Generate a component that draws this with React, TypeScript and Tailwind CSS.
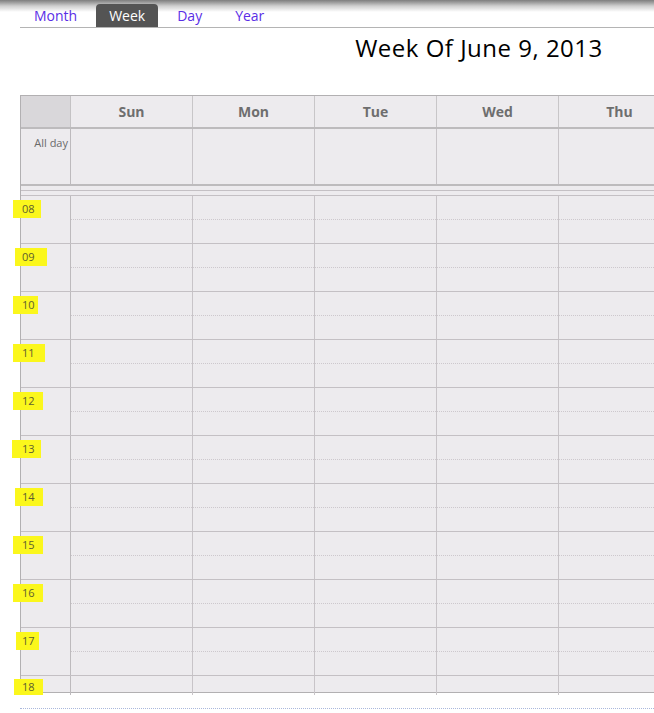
const tabs = ["Month", "Week", "Day", "Year"];
const days = ["Sun", "Mon", "Tue", "Wed", "Thu", "Fri", "Sat"];
const hours = ["08", "09", "10", "11", "12", "13", "14", "15", "16", "17"];

// hand-drawn looking marker highlights, one per hour label
const marks = [
  "-ml-[8px] pl-[9px] pr-[6px]",
  "-ml-[6px] pl-[7px] pr-[12px]",
  "-ml-[8px] pl-[9px] pr-[3px]",
  "-ml-[8px] pl-[9px] pr-[10px]",
  "-ml-[8px] pl-[9px] pr-[8px]",
  "-ml-[9px] pl-[10px] pr-[6px]",
  "-ml-[6px] pl-[7px] pr-[8px]",
  "-ml-[8px] pl-[9px] pr-[8px]",
  "-ml-[8px] pl-[9px] pr-[8px]",
  "-ml-[5px] pl-[6px] pr-[4px]",
];

const tabGap: Record<string, string> = {
  Month: "ml-[14px] mr-[19px]",
  Week: "",
  Day: "ml-[19px]",
  Year: "ml-[33px]",
};

function Tabs() {
  return (
    <div className="relative flex h-[28px] items-end border-b border-[#b4b4b4] text-[14px]">
      {tabs.map((tab) =>
        tab === "Week" ? (
          <div key={tab} className="flex h-[23px] w-[62px] items-center justify-center rounded-t-[4px] bg-[#545454] text-white">
            {tab}
          </div>
        ) : (
          <div key={tab} className={`flex h-[23px] items-center text-[#5a2ee6] ${tabGap[tab]}`}>
            {tab}
          </div>
        )
      )}
    </div>
  );
}

function HourRow({ hour, mark }: { hour: string; mark: string }) {
  return (
    <div className="grid h-[48px] grid-cols-[50px_repeat(7,122px)] border-b border-[#c4c0c4]">
      <div className="border-r border-[#bdbabd] pt-[4px] text-[11px] leading-[16px] text-[#5e5e30]">
        <span className={`inline-block bg-[#fbf71c] py-[1px] ${mark}`}>{hour}</span>
      </div>
      {days.map((day) => (
        <div key={day} className="flex flex-col border-r border-[#c8c4c8]">
          <div className="h-[24px] border-b border-dotted border-[#cdc8cd]" />
        </div>
      ))}
    </div>
  );
}

export default function App() {
  return (
    <div className="relative h-[713px] w-[654px] overflow-hidden bg-white" style={{ fontFamily: '"Open Sans", "DejaVu Sans", sans-serif' }}>
      <div className="absolute inset-x-0 top-0 h-[12px] bg-gradient-to-b from-[#7e7e7e] via-[#cfcfcf] to-white" />
      <div className="relative w-[938px] pl-[20px]">
        <Tabs />
        <div className="flex h-[67px] justify-center pt-[5px] text-[24px] leading-[30px] tracking-[0.5px] text-black">
          Week Of June 9, 2013
        </div>
        <div className="w-[907px] border border-[#b2b0b2] bg-[#edebee]">
          <div className="grid h-[33px] grid-cols-[50px_repeat(7,122px)] border-b-[2px] border-[#bdbbbd]">
            <div className="border-r border-[#c4c2c4] bg-[#d9d7da]" />
            {days.map((day) => (
              <div key={day} className="flex items-center justify-center border-r border-[#c8c6c8] text-[14px] font-bold text-[#6e6e6e]">
                {day}
              </div>
            ))}
          </div>
          <div className="grid h-[57px] grid-cols-[50px_repeat(7,122px)] border-b-[2px] border-[#bdbbbd]">
            <div className="border-r border-[#bdbabd] pr-[2px] pt-[6px] text-right text-[11px] text-[#6a6a6a]">All day</div>
            {days.map((day) => (
              <div key={day} className="border-r border-[#c8c4c8]" />
            ))}
          </div>
          <div className="h-[5px] border-b border-[#c4c0c4]" />
          <div className="h-[5px] border-b border-[#c4c0c4]" />
          {hours.map((hour, i) => (
            <HourRow key={hour} hour={hour} mark={marks[i]} />
          ))}
          <div className="grid h-[16px] grid-cols-[50px_repeat(7,122px)]">
            <div className="border-r border-[#bdbabd] pt-[3px] text-[11px] leading-[16px] text-[#5e5e30]">
              <span className="-ml-[7px] inline-block bg-[#fbf71c] pl-[8px] pr-[8px]">18</span>
            </div>
            {days.map((day) => (
              <div key={day} className="border-r border-[#c8c4c8]" />
            ))}
          </div>
        </div>
        <div className="mt-[15px] border-b border-dotted border-[#aab8dc]" />
      </div>
    </div>
  );
}
